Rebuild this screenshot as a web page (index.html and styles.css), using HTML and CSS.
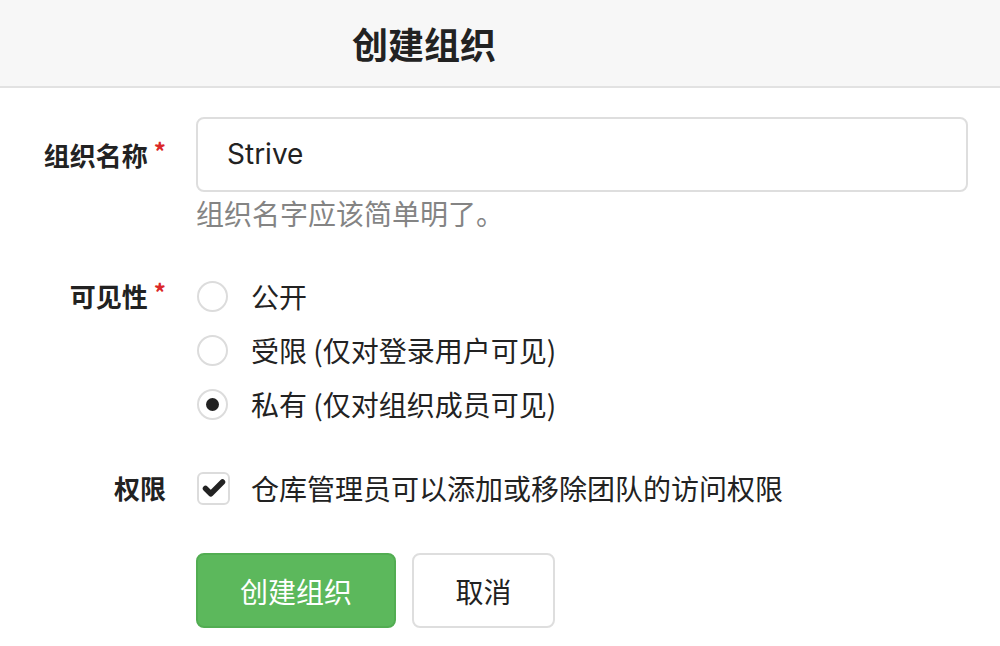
FILE: index.html
```html
<!DOCTYPE html>
<html lang="zh-CN">
<head>
<meta charset="utf-8">
<title>创建组织</title>
<link rel="stylesheet" href="styles.css">
</head>
<body>
<div class="header">
  <h3 class="title">创建组织</h3>
</div>
<form class="form">
  <div class="field">
    <label class="label">组织名称<span class="req">*</span></label>
    <div class="control">
      <div class="input">Strive</div>
      <div class="help">组织名字应该简单明了。</div>
    </div>
  </div>

  <div class="field field-vis">
    <label class="label">可见性<span class="req">*</span></label>
    <div class="control options">
      <div class="option"><span class="radio"></span><span>公开</span></div>
      <div class="option"><span class="radio"></span><span>受限 (仅对登录用户可见)</span></div>
      <div class="option"><span class="radio checked"></span><span>私有 (仅对组织成员可见)</span></div>
    </div>
  </div>

  <div class="field field-perm">
    <label class="label">权限</label>
    <div class="control">
      <div class="option">
        <span class="checkbox">
          <svg width="32" height="32" viewBox="0 0 32 32"><polyline points="7.5,16.5 12.8,21.8 24.5,10" fill="none" stroke="#222" stroke-width="5.5" stroke-linecap="round" stroke-linejoin="round"/></svg>
        </span>
        <span>仓库管理员可以添加或移除团队的访问权限</span>
      </div>
    </div>
  </div>

  <div class="field field-actions">
    <div></div>
    <div class="control actions">
      <button type="button" class="btn btn-green">创建组织</button>
      <button type="button" class="btn btn-basic">取消</button>
    </div>
  </div>
</form>
</body>
</html>
```

FILE: styles.css
```css
* { box-sizing: border-box; }
html, body { margin: 0; padding: 0; background: #fff; }
body {
  font-family: "Inter", "Noto Sans CJK SC", sans-serif;
  color: #222;
  width: 1000px;
  height: 646px;
  overflow: hidden;
}
.header {
  height: 88px;
  background: #f7f7f7;
  border-bottom: 2px solid #e2e2e2;
  width: 1000px;
}
.title {
  margin: 0;
  width: 848px;
  text-align: center;
  font-family: "Noto Sans CJK SC", sans-serif;
  font-size: 36px;
  font-weight: 700;
  line-height: 86px;
  color: #222;
}
.form {
  padding: 29px 32px 0 0;
}
.field {
  display: grid;
  grid-template-columns: 166px 1fr;
  column-gap: 30px;
}
.label {
  text-align: right;
  font-family: "Noto Sans CJK SC", sans-serif;
  font-weight: 700;
  font-size: 26px;
  color: #222;
  white-space: nowrap;
}
.field:first-child .label { line-height: 75px; }
.req {
  color: #db2828;
  margin-left: 6px;
  font-size: 24px;
  vertical-align: 0.2em;
  line-height: 0;
}
.input {
  height: 75px;
  border: 2px solid #dedede;
  border-radius: 8px;
  padding: 0 29px;
  font-size: 28px;
  line-height: 71px;
  color: #222;
  font-family: "Inter", "Noto Sans CJK SC", sans-serif;
}
.help {
  margin-top: 2px;
  font-family: "Noto Sans CJK SC", sans-serif;
  font-size: 28px;
  line-height: 38px;
  color: #848484;
}
.field-vis { margin-top: 44px; }
.field-vis .label, .field-perm .label { line-height: 40px; }
.options {
  display: flex;
  flex-direction: column;
  gap: 14px;
}
.option {
  display: flex;
  align-items: center;
  height: 40px;
  font-size: 28px;
  font-family: "Noto Sans CJK SC", sans-serif;
  color: #222;
  white-space: nowrap;
}
.radio {
  width: 31px;
  height: 31px;
  border: 2px solid #dcdcdc;
  border-radius: 50%;
  margin: 0 23px 0 1px;
  display: flex;
  align-items: center;
  justify-content: center;
  flex: none;
}
.radio.checked::after {
  content: "";
  width: 13px;
  height: 13px;
  border-radius: 50%;
  background: #222;
}
.field-perm { margin-top: 44px; }
.checkbox {
  width: 33px;
  height: 33px;
  border: 2px solid #dcdcdc;
  border-radius: 6px;
  margin: 0 21px 0 1px;
  display: flex;
  align-items: center;
  justify-content: center;
  flex: none;
}
.checkbox svg { display: block; margin: -2px; }
.field-actions { margin-top: 45px; }
.actions {
  display: flex;
  gap: 16px;
}
.btn {
  height: 75px;
  border-radius: 8px;
  font-family: "Noto Sans CJK SC", sans-serif;
  font-size: 28px;
  padding: 0;
  cursor: pointer;
}
.btn-green {
  width: 200px;
  background: #5cb85c;
  border: 2px solid #52ad52;
  color: #fff;
}
.btn-basic {
  width: 143px;
  background: #fff;
  border: 2px solid #dedede;
  color: #222;
}
```
